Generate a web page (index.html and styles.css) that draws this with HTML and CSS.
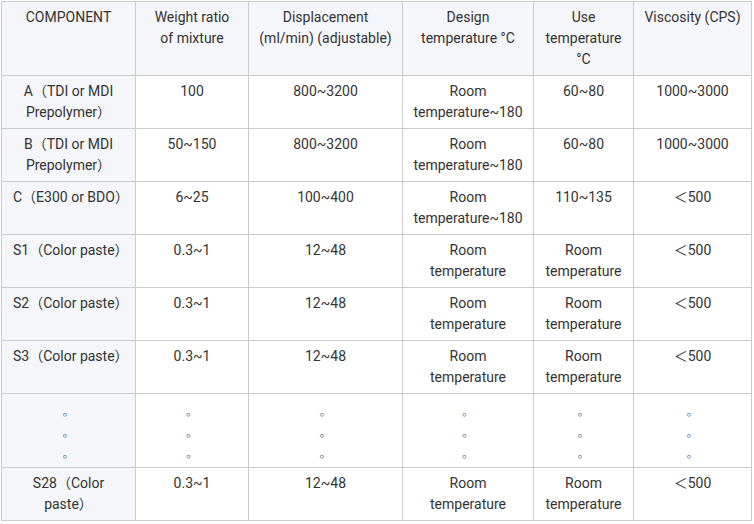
FILE: index.html
```html
<!DOCTYPE html>
<html>
<head>
<meta charset="utf-8">
<link rel="stylesheet" href="styles.css">
</head>
<body>
<table class="spec">
  <colgroup>
    <col class="c1"><col class="c2"><col class="c3"><col class="c4"><col class="c5"><col class="c6">
  </colgroup>
  <thead>
    <tr>
      <th>COMPONENT</th>
      <th>Weight ratio of mixture</th>
      <th>Displacement (ml/min) (adjustable)</th>
      <th>Design temperature °C</th>
      <th>Use temperature °C</th>
      <th>Viscosity (CPS)</th>
    </tr>
  </thead>
  <tbody>
    <tr>
      <th>A（TDI or MDI Prepolymer）</th>
      <td>100</td><td>800~3200</td><td>Room temperature~180</td><td>60~80</td><td>1000~3000</td>
    </tr>
    <tr>
      <th>B（TDI or MDI Prepolymer）</th>
      <td>50~150</td><td>800~3200</td><td>Room temperature~180</td><td>60~80</td><td>1000~3000</td>
    </tr>
    <tr>
      <th>C（E300 or BDO）</th>
      <td>6~25</td><td>100~400</td><td>Room temperature~180</td><td>110~135</td><td>＜500</td>
    </tr>
    <tr>
      <th>S1（Color paste）</th>
      <td>0.3~1</td><td>12~48</td><td>Room temperature</td><td>Room temperature</td><td>＜500</td>
    </tr>
    <tr>
      <th>S2（Color paste）</th>
      <td>0.3~1</td><td>12~48</td><td>Room temperature</td><td>Room temperature</td><td>＜500</td>
    </tr>
    <tr>
      <th>S3（Color paste）</th>
      <td>0.3~1</td><td>12~48</td><td>Room temperature</td><td>Room temperature</td><td>＜500</td>
    </tr>
    <tr class="dots">
      <th>。<br>。<br>。</th>
      <td>。<br>。<br>。</td><td>。<br>。<br>。</td><td>。<br>。<br>。</td><td>。<br>。<br>。</td><td>。<br>。<br>。</td>
    </tr>
    <tr>
      <th>S28（Color paste）</th>
      <td>0.3~1</td><td>12~48</td><td>Room temperature</td><td>Room temperature</td><td>＜500</td>
    </tr>
  </tbody>
</table>
</body>
</html>
```
FILE: styles.css
```css
html, body {
  margin: 0;
  padding: 0;
  background: #ffffff;
}
body {
  padding: 1px 0 0 1px;
  font-family: Roboto, "Noto Sans CJK SC", sans-serif;
  font-size: 14px;
  line-height: 21px;
  color: #333333;
}
.spec {
  border-collapse: separate;
  border-spacing: 0;
  table-layout: fixed;
  width: 751px;
  border-top: 1px solid #cccccc;
  border-left: 1px solid #cccccc;
}
.c1 { width: 134px; }
.c2 { width: 113px; }
.c3 { width: 154px; }
.c4 { width: 131px; }
.c5 { width: 100px; }
.c6 { width: 118px; }
.spec th,
.spec td {
  border-right: 1px solid #cccccc;
  border-bottom: 1px solid #cccccc;
  padding: 5px 8px;
  text-align: center;
  vertical-align: top;
  font-weight: normal;
}
.spec tr > :first-child,
.spec tr > :nth-child(2) {
  padding-left: 11px;
  padding-right: 11px;
}
.spec thead th,
.spec tbody th {
  background: #f5f6f9;
}
.spec .dots th,
.spec .dots td {
  padding-top: 8px;
  padding-bottom: 2px;
  font-size: 12px;
  line-height: 21px;
  color: #6b7f9e;
}
```
